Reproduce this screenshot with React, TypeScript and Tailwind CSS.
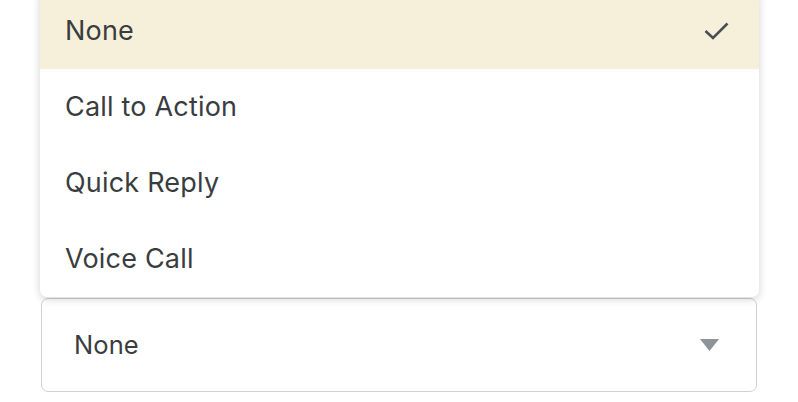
const options = ['None', 'Call to Action', 'Quick Reply', 'Voice Call'];

export default function App() {
  const selected = 'None';

  return (
    <div className="w-[798px] h-[402px] bg-white overflow-hidden font-['Inter',sans-serif]">
      <div className="relative mt-[298px] ml-[41px] w-[716px]">
        {/* Select field */}
        <div className="h-[94px] rounded-[7px] border border-[#cfd1d3] flex items-center justify-between pl-[32px] pr-[37px] text-[25.5px] tracking-[0.1px] text-[#3a3d40]">
          <span>{selected}</span>
          <svg width="19" height="12" viewBox="0 0 19 12">
            <path d="M0 0 H19 L9.5 12 Z" fill="#8c9399" />
          </svg>
        </div>

        {/* Dropdown menu */}
        <div className="absolute bottom-full left-[-1px] w-[719px] mb-[1px] bg-white rounded-b-[7px] shadow-[0_2px_8px_rgba(0,0,0,0.18)] overflow-hidden">
          {options.map((opt) => (
            <div
              key={opt}
              className={
                opt === selected
                  ? 'h-[76px] flex items-center justify-between pl-[25px] pr-[30px] bg-[#f6f0db] text-[27px] tracking-[0.2px] text-[#3a3d40]'
                  : 'h-[76px] flex items-center justify-between pl-[25px] pr-[30px] text-[27px] tracking-[0.2px] text-[#3a3d40]'
              }
            >
              <span>{opt}</span>
              {opt === selected && (
                <svg width="25" height="18" viewBox="0 0 25 18">
                  <path d="M1.5 9 L9 16 L23.5 1.5" fill="none" stroke="#4a4f54" strokeWidth="2.6" />
                </svg>
              )}
            </div>
          ))}
        </div>
      </div>
    </div>
  );
}
